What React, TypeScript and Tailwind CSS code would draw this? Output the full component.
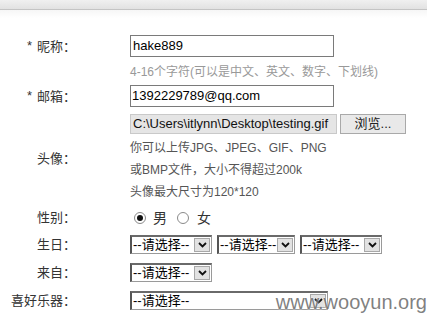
import React from 'react'

const cjk = "font-['Liberation_Sans','Noto_Sans_CJK_SC',sans-serif]"

function Label({ children, star }: { children: React.ReactNode; star?: boolean }) {
  return (
    <div className="w-[76px] shrink-0 text-right text-[13px] text-[#333] whitespace-nowrap">
      {star && <span className="mr-[5px] align-[1px]">*</span>}
      {children}
    </div>
  )
}

function FakeSelect({ width, text = '--请选择--' }: { width: number; text?: string }) {
  return (
    <div
      className="flex h-full border border-[#9a9a9a] border-l-2 border-t-2 border-l-[#555] border-t-[#6a6a6a] bg-white"
      style={{ width }}
    >
      <div className="flex-1 overflow-hidden whitespace-nowrap pl-[1px] text-[13px] leading-[15px] text-black">{text}</div>
      <div className="flex w-[16px] shrink-0 items-center justify-center border border-[#a8a8a8] bg-[#e2e2e2] my-[1px] mr-[1px]">
        <svg width="9" height="6" viewBox="0 0 9 6">
          <path d="M1 1 L4.5 4.5 L8 1" stroke="#111" strokeWidth="1.8" fill="none" />
        </svg>
      </div>
    </div>
  )
}

function Radio({ checked }: { checked?: boolean }) {
  return (
    <span className="inline-flex h-[12px] w-[12px] items-center justify-center rounded-full border border-[#8a8a8a] bg-white">
      {checked && <span className="h-[6px] w-[6px] rounded-full bg-[#111]" />}
    </span>
  )
}

export default function App() {
  return (
    <div className={`relative h-[316px] w-[427px] overflow-hidden bg-white ${cjk}`}>
      {/* top strip */}
      <div className="h-[9px] bg-gradient-to-b from-[#f0f0f0] to-[#e2e2e2]" />
      <div className="h-px bg-[#c4c4c4]" />
      <div className="h-[8px] bg-gradient-to-b from-[#f6f6f6] to-white" />

      <div className="-mt-[8px] flex flex-col">
        {/* nickname */}
        <div className="mt-[25px] flex h-[22px] items-center">
          <Label star>昵称：</Label>
          <div className="ml-[54px] flex h-full w-[204px] items-center border border-[#7a7a7a] pl-[2px] text-[13px] text-black">
            hake889
          </div>
        </div>
        <div className="mt-[5px] ml-[130px] h-[20px] whitespace-nowrap text-[12px] leading-[20px] text-[#999]">
          4-16个字符(可以是中文、英文、数字、下划线)
        </div>

        {/* email */}
        <div className="mt-[3px] flex h-[22px] items-center">
          <Label star>邮箱：</Label>
          <div className="ml-[54px] flex h-full w-[204px] items-center border border-[#7a7a7a] pl-[1px] text-[13px] text-black">
            1392229789@qq.com
          </div>
        </div>

        {/* avatar */}
        <div className="mt-[7px] flex items-center">
          <Label>头像：</Label>
          <div className="ml-[54px] flex flex-col">
            <div className="flex h-[20px] gap-[3px]">
              <div className="flex w-[207px] items-center overflow-hidden whitespace-nowrap border border-[#c9c9c9] bg-[#e5e5e5] pl-[2px] text-[13px] text-[#111]">
                C:\Users\itlynn\Desktop\testing.gif
              </div>
              <div className="flex w-[66px] items-center justify-center border border-[#a9a9a9] bg-[#e9e9e9] text-[13px] text-[#222]">
                浏览...
              </div>
            </div>
            <div className="mt-[3px] text-[12px] leading-[22px] text-[#555]">
              <div>你可以上传JPG、JPEG、GIF、PNG</div>
              <div>或BMP文件，大小不得超过200k</div>
              <div>头像最大尺寸为120*120</div>
            </div>
          </div>
        </div>

        {/* gender */}
        <div className="mt-[5px] flex h-[20px] items-center">
          <Label>性别：</Label>
          <div className="ml-[58px] flex items-center text-[14px] text-[#333]">
            <Radio checked />
            <span className="ml-[7px]">男</span>
            <span className="ml-[10px] flex"><Radio /></span>
            <span className="ml-[8px]">女</span>
          </div>
        </div>

        {/* birthday */}
        <div className="mt-[7px] flex h-[19px] items-center">
          <Label>生日：</Label>
          <div className="ml-[54px] flex h-full gap-[5px]">
            <FakeSelect width={82} />
            <FakeSelect width={78} />
            <FakeSelect width={82} />
          </div>
        </div>

        {/* from */}
        <div className="mt-[9px] flex h-[19px] items-center">
          <Label>来自：</Label>
          <div className="ml-[54px] flex h-full">
            <FakeSelect width={82} />
          </div>
        </div>

        {/* instrument */}
        <div className="mt-[9px] flex h-[19px] items-center">
          <Label>喜好乐器：</Label>
          <div className="ml-[54px] flex h-full">
            <FakeSelect width={198} />
          </div>
        </div>
      </div>

      <div className="absolute bottom-[3px] right-0 font-['Liberation_Sans',sans-serif] text-[20px] leading-[22px] text-[#6a6a6a]/85 [text-shadow:0_0_2px_rgba(255,255,255,0.9)]">
        www.wooyun.org
      </div>
    </div>
  )
}
